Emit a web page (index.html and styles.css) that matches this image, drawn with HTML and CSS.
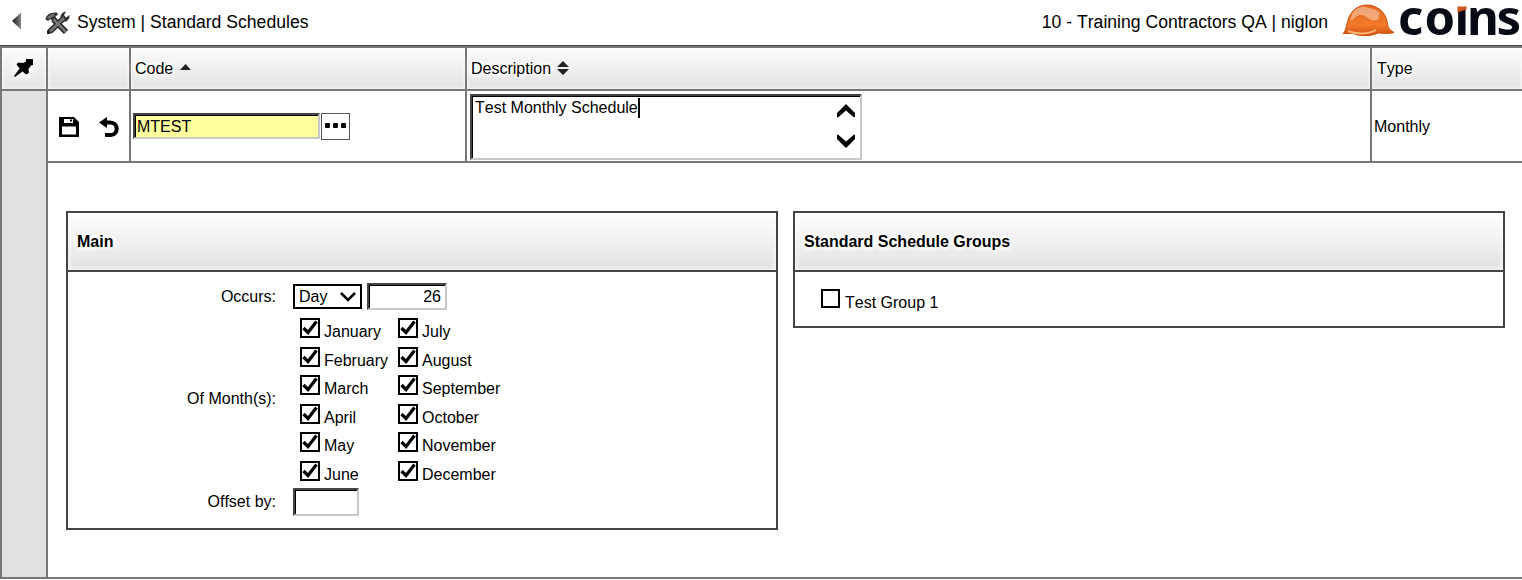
FILE: index.html
```
<!DOCTYPE html>
<html lang="en">
<head>
<meta charset="utf-8">
<title>Standard Schedules</title>
<link rel="stylesheet" href="styles.css">
</head>
<body>
<svg width="0" height="0" class="defs">
  <symbol id="check" viewBox="0 0 20 20"><rect x="1" y="1" width="18" height="18" fill="#fff" stroke="#000" stroke-width="2"/><path d="M3.500 10 8 14.500 16.500 3.500" fill="none" stroke="#000" stroke-width="3.200"/></symbol>
</svg>
<header class="topbar">
  <svg class="back" width="10" height="18" viewBox="0 0 10 18"><defs><linearGradient id="bg" x1="0" x2="1"><stop offset="0" stop-color="#111"/><stop offset="1" stop-color="#888"/></linearGradient></defs><path d="M0 9 9 .5V17.500z" fill="url(#bg)"/></svg>
  <svg class="tools" width="26" height="24" viewBox="0 0 26 24">
    <path d="M8.500 8.500 21 21" stroke="#222" stroke-width="6"/>
    <path d="M20 6 5 20.500" stroke="#222" stroke-width="5.500"/>
    <path d="M.5 8.500C1 4 5 1 12 1.500L13 4 10.500 5 11.500 8 8 11 5.500 8 3 10z" fill="#333"/>
    <path d="M16 9C14 5 17 1 21 .5L19 4 21 6.500 24.500 4C25 9 21 12 17 10z" fill="#333"/>
    <path d="M2 19.500 6 16 9 19 5 23H2z" fill="#222"/>
    <path d="M8.500 8.500 21 21M19 7 5 20.500M3 7 9 3.500" stroke="#777" stroke-width="2.600"/>
  </svg>
  <span class="title">System | Standard Schedules</span>
  <span class="company">10 - Training Contractors QA | niglon</span>
  <svg class="logo" width="180" height="40" viewBox="0 0 180 40">
    <defs><linearGradient id="hat" x1="0" y1="0" x2="0" y2="1"><stop offset="0" stop-color="#e46a20"/><stop offset=".65" stop-color="#f37a2b"/><stop offset="1" stop-color="#cf4e0d"/></linearGradient></defs>
    <path d="M1 34.500C3 33 4 30 5 25 7 13 15 6 25 6 34 6 43 12 45 22 46 28 46 30 52 33.500 44 35.500 40 34 36 34 28 38 16 37 11 34.500z" fill="url(#hat)" stroke="#c9500f"/>
    <path d="M10 15C13 10 17 8 22 7.500 27 10 34 9 38 14 36 17 38 20 34 21 27 23 25 15 18 16 14 16 13 20 8 22z" fill="#fff" opacity=".38"/>
    <path d="M6 32C15 36 27 35 34 31" fill="none" stroke="#ffb47a" stroke-width="2"/>
    <text class="wordmark" y="35.500" x="56 82.500 112.500 125 154.500">coıns</text>
    <path d="M115.500 7.500H124.500V10.500L115.500 13.500z" fill="#d2521b"/>
  </svg>
</header>
<main class="grid">
  <aside class="rail">
    <div class="rail-head head">
      <svg width="20" height="20" viewBox="0 0 20 20"><path d="M12 1H19V7L17 7.500 14.500 11 15 15 12 16.500 8.500 13.500 1 19 0 18 5.500 10.500 2.500 6.500 4 4.500 9 5 12 3.500z" fill="#000"/></svg>
    </div>
  </aside>
  <div class="content">
    <div class="row heads">
      <div class="cell head"></div>
      <div class="cell head"><span class="glow">Code</span><svg class="sort-up" width="11" height="6" viewBox="0 0 11 6"><path d="M0 6 5.500 0 11 6z" fill="#222"/></svg></div>
      <div class="cell head"><span class="glow">Description</span><svg class="sort" width="12" height="14" viewBox="0 0 12 14"><path d="M0 6 6 0 12 6zM0 8H12L6 14z" fill="#222"/></svg></div>
      <div class="cell head last"><span class="glow">Type</span></div>
    </div>
    <div class="row record">
      <div class="cell actions">
        <svg width="20" height="20" viewBox="0 0 20 20"><path fill="#000" fill-rule="evenodd" d="M0 0H15L20 5V20H0zM3 9.500V17.500H17V9.500z"/><path d="M5 2H14V6H5z" fill="#fff"/><path d="M11 2.500H13V4.500H11z"/></svg>
        <svg width="20" height="21" viewBox="0 0 20 21"><path d="M5 5.500H11C20 5.500 19.500 18 12 18H6" fill="none" stroke="#000" stroke-width="4"/><path d="M0 5.500 8 0V11z"/></svg>
      </div>
      <div class="cell code">
        <div class="field code-input">MTEST</div>
        <div class="lookup"><i></i><i></i><i></i></div>
      </div>
      <div class="cell desc">
        <div class="field area"><span class="typed">Test Monthly Schedule</span>
          <div class="arrows">
            <svg width="18" height="14" viewBox="0 0 18 14"><path d="M0 13V9L9 0 18 9V13L17 13.500 9 6.500 1 13.500z"/></svg>
            <svg width="18" height="14" viewBox="0 0 18 14"><path d="M0 1V5L9 14 18 5V1L17 .5 9 7.500 1 .5z"/></svg>
          </div>
        </div>
      </div>
      <div class="cell last type">Monthly</div>
    </div>
    <div class="detail">
      <section class="panel">
        <h2 class="panel-head"><span>Main</span></h2>
        <div class="form">
          <label class="occurs">Occurs:</label>
          <div class="controls">
            <div class="select">Day<svg width="16" height="10" viewBox="0 0 16 10"><path d="M1 1 8 8 15 1" fill="none" stroke="#000" stroke-width="2.500"/></svg></div>
            <div class="field day">26</div>
          </div>
          <label class="months-label">Of Month(s):</label>
          <div class="months">
            <div class="option"><svg><use href="#check"/></svg>January</div>
            <div class="option"><svg><use href="#check"/></svg>February</div>
            <div class="option"><svg><use href="#check"/></svg>March</div>
            <div class="option"><svg><use href="#check"/></svg>April</div>
            <div class="option"><svg><use href="#check"/></svg>May</div>
            <div class="option"><svg><use href="#check"/></svg>June</div>
            <div class="option"><svg><use href="#check"/></svg>July</div>
            <div class="option"><svg><use href="#check"/></svg>August</div>
            <div class="option"><svg><use href="#check"/></svg>September</div>
            <div class="option"><svg><use href="#check"/></svg>October</div>
            <div class="option"><svg><use href="#check"/></svg>November</div>
            <div class="option"><svg><use href="#check"/></svg>December</div>
          </div>
          <label class="offset-label">Offset by:</label>
          <div class="field offset"></div>
        </div>
      </section>
      <section class="panel">
        <h2 class="panel-head"><span>Standard Schedule Groups</span></h2>
        <div class="groups"><div class="option"><svg viewBox="0 0 20 20"><rect x="1" y="1" width="17" height="17" fill="#fff" stroke="#000" stroke-width="2"/></svg>Test Group 1</div></div>
      </section>
    </div>
  </div>
</main>
</body>
</html>
```
FILE: styles.css
```
* { box-sizing: border-box; }
body { margin: 0; width: 1522px; height: 580px; overflow: hidden; background: #fff; color: #000; font: 16px/18px "Liberation Sans", Arial, sans-serif; font-kerning: none; }
svg { display: block; flex: none; }
.defs { position: absolute; }
.topbar { display: flex; align-items: center; height: 48px; padding: 0 0 4px 12px; border-bottom: 2px solid #777; box-shadow: inset 0 -1px #444; font-size: 17.600px; white-space: nowrap; }
.back { margin-right: 23px; }
.tools { margin: 3px 6px 0 0; }
.company { margin-left: auto; margin-right: 14px; }
.title, .company { padding-top: 1px; }
.logo { margin-top: -4px; }
.wordmark { font: 700 49px "Noto Sans", sans-serif; fill: #050a14; }

.grid { display: flex; height: 531px; border-left: 2px solid #777; border-bottom: 2px solid #777; }
.rail { width: 46px; border-right: 2px solid #777; background: #e1e1e1; }
.head { background: linear-gradient(#fbfbfb, #e3e3e3); box-shadow: inset 0 0 4px #fff; }
.rail-head { height: 43px; padding: 10px 0 0 12px; border-bottom: 2px solid #777; }
.rail-head svg { filter: drop-shadow(0 0 4px #fff) drop-shadow(0 0 3px #fff); }
.content { flex: 1; }
.row { display: grid; grid-template-columns: 83px 336px 905px 1fr; border-bottom: 2px solid #777; }
.heads { height: 43px; }
.record { height: 72px; }
.cell { display: flex; align-items: center; border-right: 2px solid #777; padding-left: 4px; }
.last { border-right: 0; padding-left: 5px; }
.glow, .panel-head span { text-shadow: 0 0 3px #fff, 0 0 4px #fff, 0 0 4px #fff, 0 0 6px #fff, 0 0 6px #fff, 0 0 7px #fff, 0 0 8px #fff, 0 0 8px #fff; }
.sort-up { margin: -3px 0 0 7px; }
.sort { margin: -2px 0 0 6px; }
.actions { gap: 20px; padding: 2px 0 0 11px; }
.code { align-items: flex-start; gap: 1px; padding: 22px 0 0 2px; }
.field { border: 2px solid; border-color: #444 #c8c8c8 #c8c8c8 #444; background: #fff; box-shadow: inset 1px 1px #000; }
.code-input { width: 187px; height: 26px; padding-left: 2px; line-height: 23px; background: #ffff9e; }
.lookup { display: flex; justify-content: center; align-items: center; gap: 3px; width: 29px; height: 27px; border: 1px solid #555; padding-bottom: 2px; }
.lookup i { width: 5px; height: 5px; background: #000; border-radius: 1px; }
.desc { align-items: flex-start; padding: 3px 0 0 3px; }
.area { display: flex; justify-content: space-between; width: 392px; height: 66px; padding: 2px 5px 0 3px; }
.typed { height: 20px; border-right: 2px solid #000; line-height: 19px; }
.arrows { display: flex; flex-direction: column; gap: 16px; padding-top: 6px; }
.type { padding: 2px 0 0 2px; }

.detail { display: flex; align-items: flex-start; gap: 15px; padding: 48px 0 0 18px; }
.panel { width: 712px; border: 2px solid #444; }
.panel-head { display: flex; align-items: center; height: 59px; margin: 0; padding-left: 9px; border-bottom: 2px solid #444; font-size: 16px; background: linear-gradient(#fff, #e2e2e2); box-shadow: inset 0 0 6px #fff; }
.form { display: grid; grid-template-columns: 208px 1fr; grid-template-rows: 27px 178px 28px; column-gap: 17px; height: 256px; padding-top: 11px; }
.form label { text-align: right; }
.occurs { padding-top: 5px; }
.controls { display: flex; gap: 5px; }
.select { display: flex; align-items: center; justify-content: space-between; width: 69px; height: 25px; margin-top: 1px; padding: 0 4px; border: 2px solid #000; }
.day { width: 80px; height: 27px; padding-right: 4px; text-align: right; line-height: 24px; }
.months-label { padding-top: 80px; }
.months { display: grid; grid-auto-flow: column; grid-template: repeat(6, 28.500px) / 98px auto; justify-content: start; padding: 8px 0 0 7px; }
.option { display: flex; gap: 4px; line-height: 28px; }
.option svg { width: 20px; height: 20px; }
.offset-label { padding-top: 5px; }
.offset { width: 66px; height: 28px; }
.groups { height: 54px; padding: 17px 0 0 26px; }
```
